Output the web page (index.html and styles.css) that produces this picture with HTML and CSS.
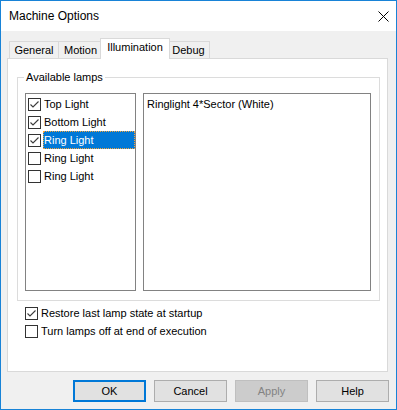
FILE: index.html
```html
<!DOCTYPE html>
<html>
<head>
<meta charset="utf-8">
<link rel="stylesheet" href="styles.css">
</head>
<body>
<div class="window">
  <div class="titlebar">
    <span class="title">Machine Options</span>
    <svg class="close" width="11" height="11" viewBox="0 0 11 11"><path d="M0.5 0.5L10.5 10.5M10.5 0.5L0.5 10.5" stroke="#000" stroke-width="1" fill="none"/></svg>
  </div>
  <div class="client">
    <div class="tabs">
      <div class="tab t-general">General</div>
      <div class="tab t-motion">Motion</div>
      <div class="tab sel">Illumination</div>
      <div class="tab t-debug">Debug</div>
    </div>
    <div class="panel">
      <fieldset class="group">
        <legend>Available lamps</legend>
        <div class="lists">
          <div class="listbox lamps">
            <div class="row"><span class="cb on"><svg viewBox="0 0 11 11"><path d="M1.5 5.5L4 8L9.5 2.5" /></svg></span><span class="lbl">Top Light</span></div>
            <div class="row"><span class="cb on"><svg viewBox="0 0 11 11"><path d="M1.5 5.5L4 8L9.5 2.5" /></svg></span><span class="lbl">Bottom Light</span></div>
            <div class="row"><span class="cb on"><svg viewBox="0 0 11 11"><path d="M1.5 5.5L4 8L9.5 2.5" /></svg></span><span class="lbl selected">Ring Light</span></div>
            <div class="row"><span class="cb"></span><span class="lbl">Ring Light</span></div>
            <div class="row"><span class="cb"></span><span class="lbl">Ring Light</span></div>
          </div>
          <div class="listbox detail">
            <div class="item">Ringlight 4*Sector (White)</div>
          </div>
        </div>
      </fieldset>
      <div class="checks">
        <div class="check"><span class="cb on"><svg viewBox="0 0 11 11"><path d="M1.5 5.5L4 8L9.5 2.5" /></svg></span><span class="ctext">Restore last lamp state at startup</span></div>
        <div class="check"><span class="cb"></span><span class="ctext">Turn lamps off at end of execution</span></div>
      </div>
    </div>
    <div class="buttons">
      <div class="btn default">OK</div>
      <div class="btn">Cancel</div>
      <div class="btn disabled">Apply</div>
      <div class="btn">Help</div>
    </div>
  </div>
</div>
</body>
</html>
```
FILE: styles.css
```css
* { box-sizing: border-box; }
html, body { margin: 0; padding: 0; }
body {
  width: 397px;
  height: 410px;
  overflow: hidden;
  font-family: "Liberation Sans", Arial, sans-serif;
  font-size: 11px;
  color: #000;
  background: #f0f0f0;
}
.window {
  width: 397px;
  height: 410px;
  border: 1px solid #1883d7;
  display: flex;
  flex-direction: column;
  background: #f0f0f0;
}
.titlebar {
  flex: none;
  height: 30px;
  background: #fff;
  display: flex;
  align-items: center;
  justify-content: space-between;
  padding: 0 7px 0 8px;
}
.title {
  font-size: 12px;
  line-height: 16px;
}
.close { display: block; }
.client {
  flex: 1;
  display: flex;
  flex-direction: column;
  padding: 7px 8px 0 6px;
}
.tabs {
  display: flex;
  align-items: flex-end;
  height: 20px;
  padding-left: 2px;
}
.tab {
  height: 17px;
  border: 1px solid #d9d9d9;
  border-bottom: none;
  background: #f0f0f0;
  text-align: center;
  line-height: 15px;
  padding-top: 1px;
  margin-left: -1px;
}
.tab:first-child { margin-left: 0; }
.t-general { width: 50px; }
.t-motion { width: 45px; }
.t-debug { width: 43px; }
.tab.sel {
  position: relative;
  z-index: 2;
  width: 70px;
  height: 21px;
  margin: 0 -2px -1px -3px;
  background: #fff;
}
.panel {
  height: 314px;
  border: 1px solid #d9d9d9;
  background: #fff;
  padding: 11px 7px 0 9px;
}
.group {
  margin: 0;
  min-width: 0;
  border: 1px solid #dcdcdc;
  padding: 8px 8px 9px 7px;
}
.group legend {
  padding: 0 2px;
  margin-left: -1px;
  line-height: 15px;
}
.lists {
  display: flex;
  gap: 7px;
}
.listbox {
  height: 198px;
  border: 1px solid #828282;
  background: #fff;
  padding-top: 1px;
}
.lamps { width: 111px; }
.detail { flex: 1; padding-left: 3px; }
.item { line-height: 18px; }
.row {
  display: flex;
  align-items: center;
  height: 18px;
}
.cb {
  flex: none;
  width: 13px;
  height: 13px;
  border: 1px solid #333;
  background: #fff;
  display: flex;
  align-items: center;
  justify-content: center;
}
.cb svg {
  width: 11px;
  height: 11px;
  display: block;
}
.cb svg path {
  fill: none;
  stroke: #3b3b3b;
  stroke-width: 1.1;
}
.row .cb { margin-left: 2px; }
.lbl {
  flex: 1;
  margin-left: 2px;
  padding: 0 1px;
  line-height: 18px;
  height: 18px;
  white-space: nowrap;
}
.lbl.selected {
  background: #0078d7;
  color: #fff;
  outline: 1px dotted #f3a43c;
  outline-offset: -1px;
}
.checks {
  margin-top: 3px;
  padding-left: 8px;
}
.check {
  display: flex;
  align-items: center;
  height: 18px;
}
.ctext { margin-left: 3px; }
.buttons {
  display: flex;
  justify-content: flex-end;
  gap: 8px;
  margin-top: 8px;
  margin-right: -1px;
}
.btn {
  width: 73px;
  height: 22px;
  border: 1px solid #adadad;
  background: #e1e1e1;
  text-align: center;
  line-height: 20px;
}
.btn.default {
  border: 2px solid #0078d7;
  line-height: 18px;
}
.btn.disabled {
  background: #cccccc;
  border-color: #bfbfbf;
  color: #838383;
}
```
